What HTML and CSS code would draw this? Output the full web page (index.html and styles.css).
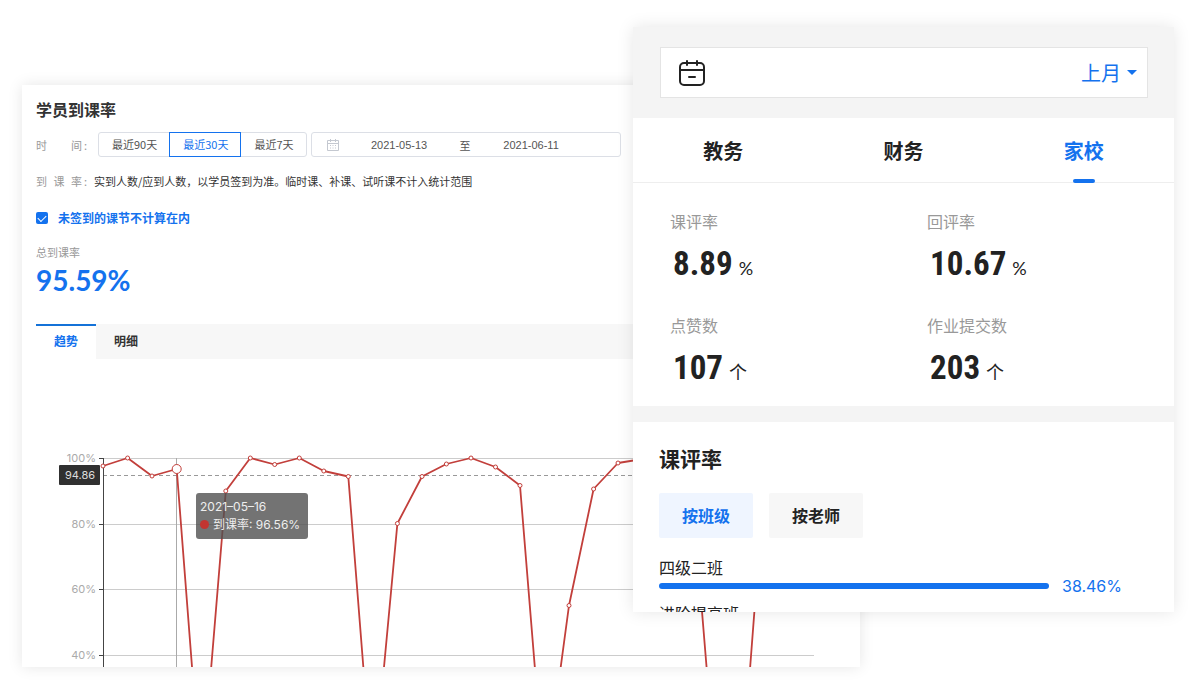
FILE: index.html
```html
<!DOCTYPE html>
<html lang="zh-CN">
<head>
  <meta charset="UTF-8">
  <meta name="viewport" content="width=device-width, initial-scale=1">
  <title>学员到课率</title>
  <link rel="stylesheet" href="styles.css">
</head>
<body>

<main class="showcase">

  <section class="report">
    <div class="report-head">
      <h1>学员到课率</h1>

      <div class="row filters">
        <div class="row-label"><span>时</span><span>间</span></div>
        <div class="range-group">
          <button type="button">最近90天</button>
          <button type="button" class="active">最近30天</button>
          <button type="button">最近7天</button>
        </div>
        <div class="date-range">
          <svg width="12" height="12" viewBox="0 0 12 12" fill="none" stroke="#c4c8d0">
            <path d="M.5 1.5h11v10H.5zM.5 4.5h11M3.5 0v3M8.5 0v3"/>
            <path d="M3 6.5h6M3 9h6" stroke-dasharray="1 1.5"/>
          </svg>
          <input type="text" value="2021-05-13" aria-label="开始日期">
          <span>至</span>
          <input type="text" value="2021-06-11" aria-label="结束日期">
        </div>
      </div>

      <div class="row note">
        <div class="row-label"><span>到</span><span>课</span><span>率</span></div>
        <p>实到人数/应到人数，以学员签到为准。临时课、补课、试听课不计入统计范围</p>
      </div>

      <label class="check"><input type="checkbox" checked>未签到的课节不计算在内</label>

      <div class="total-label">总到课率</div>
      <div class="total-value">95.59%</div>

      <div class="report-tabs">
        <button type="button" class="active">趋势</button>
        <button type="button">明细</button>
      </div>
    </div>

    <div class="chart">
      <svg viewBox="0 0 838 308">
        <g stroke="#ccc">
          <path d="M81 99.5H792M81 165.5H792M81 230.5H792M81 296.5H792"/>
        </g>
        <path d="M154.5 99V308" stroke="#aaa"/>
        <path d="M81 116.5H792" stroke="#999" stroke-dasharray="4 3"/>
        <path d="M81.5 99V308M77 99.5H81M77 165.5H81M77 230.5H81M77 296.5H81" stroke="#444"/>
        <g class="axis-text">
          <text x="74" y="103">100%</text>
          <text x="74" y="169">80%</text>
          <text x="74" y="234">60%</text>
          <text x="74" y="300">40%</text>
        </g>
        <polyline fill="none" stroke="#c23f3b" stroke-width="1.8" stroke-linejoin="bevel"
          points="81,107 105.6,99 130,117 154.7,110 179.3,428 203.8,132 228.3,99 252.7,105.5 277.3,99 301.8,112 326.3,117.5 350.8,428 375.4,164.5 400,117.5 424.4,105 449,99 473.5,108 498,126.5 522.6,428 547,246.5 571.6,130 596,104 620.6,100 645,108 669.8,128 694.4,428 719,428 743.5,107"/>
        <g fill="#fff" stroke="#c23f3b">
          <circle cx="81" cy="107" r="2"/>
          <circle cx="105.6" cy="99" r="2"/>
          <circle cx="130" cy="117" r="2"/>
          <circle cx="154.7" cy="110" r="4.5"/>
          <circle cx="203.8" cy="132" r="2"/>
          <circle cx="228.3" cy="99" r="2"/>
          <circle cx="252.7" cy="105.5" r="2"/>
          <circle cx="277.3" cy="99" r="2"/>
          <circle cx="301.8" cy="112" r="2"/>
          <circle cx="326.3" cy="117.5" r="2"/>
          <circle cx="375.4" cy="164.5" r="2"/>
          <circle cx="400" cy="117.5" r="2"/>
          <circle cx="424.4" cy="105" r="2"/>
          <circle cx="449" cy="99" r="2"/>
          <circle cx="473.5" cy="108" r="2"/>
          <circle cx="498" cy="126.5" r="2"/>
          <circle cx="547" cy="246.5" r="2"/>
          <circle cx="571.6" cy="130" r="2"/>
          <circle cx="596" cy="104" r="2"/>
        </g>
        <rect x="37" y="106" width="41" height="20" rx="1" fill="#303030"/>
        <text class="pointer-text" x="58" y="120">94.86</text>
      </svg>
      <div class="tooltip">
        <div>2021–05–16</div>
        <div><i class="dot"></i>到课率: 96.56%</div>
      </div>
    </div>
  </section>

  <section class="phone">
    <div class="phone-head">
      <div class="month-box">
        <svg width="28" height="28" viewBox="0 0 28 28" fill="none" stroke="#222" stroke-width="2" stroke-linecap="round">
          <rect x="2" y="4" width="24" height="22" rx="4"/>
          <path d="M2 11h24M9 2v4M19 2v4M11 18h6"/>
        </svg>
        <select aria-label="月份">
          <option>上月</option>
        </select>
        <span class="caret"></span>
      </div>
    </div>

    <nav class="phone-tabs">
      <button type="button">教务</button>
      <button type="button">财务</button>
      <button type="button" class="active">家校</button>
    </nav>

    <div class="stats">
      <div class="stat">
        <div class="stat-label">课评率</div>
        <div class="stat-value">8.89<small>%</small></div>
      </div>
      <div class="stat">
        <div class="stat-label">回评率</div>
        <div class="stat-value">10.67<small>%</small></div>
      </div>
      <div class="stat">
        <div class="stat-label">点赞数</div>
        <div class="stat-value">107<small>个</small></div>
      </div>
      <div class="stat">
        <div class="stat-label">作业提交数</div>
        <div class="stat-value">203<small>个</small></div>
      </div>
    </div>

    <div class="rating">
      <h2>课评率</h2>
      <div class="switch">
        <button type="button" class="active">按班级</button>
        <button type="button">按老师</button>
      </div>
      <div class="class-list">
        <div class="class-name">四级二班</div>
        <div class="class-rate">
          <div class="bar"></div>
          <span>38.46%</span>
        </div>
        <div class="class-name">进阶提高班</div>
      </div>
    </div>
  </section>

</main>

</body>
</html>
```
FILE: styles.css
```css
* {
  box-sizing: border-box;
}

body {
  margin: 0;
  background: #fff;
  color: #333;
  font-family: "Noto Sans CJK SC", sans-serif;
}

h1, h2, p {
  margin: 0;
}

button, input, select {
  margin: 0;
  padding: 0;
  border: 0;
  background: none;
  color: inherit;
  font: inherit;
}

svg {
  display: block;
}

/* the two cards share the middle cell, the phone card lies on top */
.showcase {
  display: grid;
  grid-template-columns: 611fr 227fr 314fr;
  grid-template-rows: 58px auto 55px;
  padding: 27px 26px 18px 22px;
}

.report {
  grid-area: 2 / 1 / 4 / 3;
  background: #fff;
  box-shadow: 0 0 14px rgba(0, 0, 0, 0.1);
}

.phone {
  grid-area: 1 / 2 / 3 / 4;
  z-index: 1;
  background: #fff;
  color: #222;
  box-shadow: 0 0 16px rgba(0, 0, 0, 0.1);
}

/* report card */
.report-head {
  padding: 12px 14px 0;
  font-size: 11px;
  line-height: 20px;
}

h1 {
  font-size: 16px;
  font-weight: 700;
  line-height: 24px;
}

.row {
  display: flex;
}

.row-label {
  display: flex;
  justify-content: space-between;
  position: relative;
  width: 46px;
  color: #999;
}

.row-label::after {
  content: ":";
  position: absolute;
  left: 100%;
  padding-left: 2px;
}

.filters {
  align-items: center;
  margin-top: 11px;
}

.range-group {
  display: flex;
  height: 25px;
  margin-left: 16px;
  border: 1px solid #dcdfe6;
  border-radius: 3px;
  color: #555;
}

.range-group button {
  padding: 0 12px 2px 13px;
}

.range-group .active {
  margin: -1px 0;
  border: 1px solid #1472ee;
  color: #1472ee;
}

.date-range {
  display: flex;
  align-items: center;
  width: 310px;
  height: 25px;
  margin-left: 4px;
  padding-left: 15px;
  border: 1px solid #dcdfe6;
  border-radius: 3px;
  color: #555;
}

.date-range input {
  width: 121px;
  font-family: "Liberation Sans", sans-serif;
  text-align: center;
}

.date-range span {
  width: 11px;
}

.note {
  margin-top: 14px;
}

.note p {
  margin-left: 12px;
}

.check {
  display: flex;
  align-items: center;
  margin-top: 17px;
  color: #1472ee;
  font-size: 12px;
  font-weight: 700;
}

.check input {
  appearance: none;
  display: grid;
  place-items: center;
  width: 12px;
  height: 12px;
  margin-right: 10px;
  border-radius: 2px;
  background: #1472ee;
}

.check input:checked::after {
  content: "";
  width: 7px;
  height: 4px;
  margin-bottom: 2px;
  border: solid #fff;
  border-width: 0 0 1px 1px;
  transform: rotate(-45deg);
}

.total-label {
  margin-top: 14px;
  color: #999;
}

.total-value {
  color: #1472ee;
  font-family: Lato, sans-serif;
  font-size: 28px;
  font-weight: 700;
  line-height: 36px;
}

.report-tabs {
  display: flex;
  height: 35px;
  margin-top: 26px;
  background: #f7f7f7;
  font-size: 12px;
  font-weight: 700;
}

.report-tabs button {
  padding: 0 18px 3px;
  border-top: 2px solid transparent;
}

.report-tabs .active {
  border-top-color: #1472d8;
  background: #fff;
  color: #1472ee;
}

.chart {
  position: relative;
}

.chart svg {
  width: 100%;
}

.axis-text {
  fill: #aaa;
  font-family: Inter, sans-serif;
  font-size: 11px;
  text-anchor: end;
}

.pointer-text {
  fill: #ddd;
  font-family: Inter, sans-serif;
  font-size: 11px;
  text-anchor: middle;
}

.tooltip {
  position: absolute;
  top: 134px;
  left: 174px;
  min-width: 112px;
  padding: 5px 4px;
  border-radius: 3px;
  background: rgba(80, 80, 80, 0.8);
  color: #eee;
  font-family: Inter, "Noto Sans CJK SC", sans-serif;
  font-size: 12px;
  line-height: 18px;
  white-space: nowrap;
}

.dot {
  display: inline-block;
  width: 9px;
  height: 9px;
  margin-right: 4px;
  border-radius: 50%;
  background: #c23531;
}

/* phone card */
.phone-head {
  padding: 20px 26px 20px 27px;
  background: #f4f4f4;
}

.month-box {
  display: flex;
  align-items: center;
  height: 51px;
  padding: 0 10px 0 17px;
  border: 1px solid #e4e4e4;
  background: #fff;
  color: #1472ee;
}

.month-box select {
  appearance: none;
  margin-left: auto;
  font-size: 20px;
}

.caret {
  margin-left: 6px;
  border: 5px solid transparent;
  border-top-color: #1472ee;
  border-bottom: 0;
}

.phone-tabs {
  display: grid;
  grid-template-columns: repeat(3, 1fr);
  height: 65px;
  border-bottom: 1px solid #eee;
}

.phone-tabs button {
  position: relative;
  font-size: 20px;
  font-weight: 700;
}

.phone-tabs .active {
  color: #1472ee;
}

.phone-tabs .active::after {
  content: "";
  position: absolute;
  bottom: -1px;
  left: 50%;
  width: 22px;
  height: 4px;
  margin-left: -11px;
  border-radius: 2px;
  background: #1472ee;
}

.stats {
  display: grid;
  grid-template-columns: 51% 49%;
  row-gap: 30px;
  padding: 26px 0 19px 37px;
  border-bottom: 16px solid #f4f4f4;
}

.stat-label {
  color: #999;
  font-size: 16px;
  line-height: 24px;
}

.stat-value {
  display: flex;
  align-items: baseline;
  height: 40px;
  margin-top: 10px;
  padding-left: 3px;
  font-family: "Roboto Condensed", "Liberation Sans Narrow", sans-serif;
  font-size: 33px;
  font-weight: 700;
  line-height: 42px;
}

.stat-value small {
  margin-left: 6px;
  font-family: Lato, "Noto Sans CJK SC", sans-serif;
  font-size: 18px;
  font-weight: 400;
}

.rating {
  padding: 20px 26px 0;
}

h2 {
  font-size: 21px;
  font-weight: 700;
  line-height: 32px;
}

.switch {
  display: flex;
  gap: 16px;
  margin-top: 19px;
}

.switch button {
  width: 94px;
  height: 45px;
  padding-bottom: 2px;
  border-radius: 2px;
  background: #f7f7f7;
  font-size: 16px;
  font-weight: 700;
}

.switch .active {
  background: #eff5ff;
  color: #1472ee;
}

.class-list {
  max-height: 57px;
  margin-top: 17px;
  overflow: hidden;
}

.class-name {
  font-size: 16px;
  line-height: 24px;
}

.class-rate {
  display: flex;
  align-items: center;
  height: 14px;
  margin-bottom: 8px;
}

.bar {
  flex: 1;
  height: 6px;
  border-radius: 3px;
  background: #1472ee;
}

.class-rate span {
  width: 86px;
  margin-left: 13px;
  color: #1472ee;
  font-family: Inter, sans-serif;
  font-size: 16px;
}
```
